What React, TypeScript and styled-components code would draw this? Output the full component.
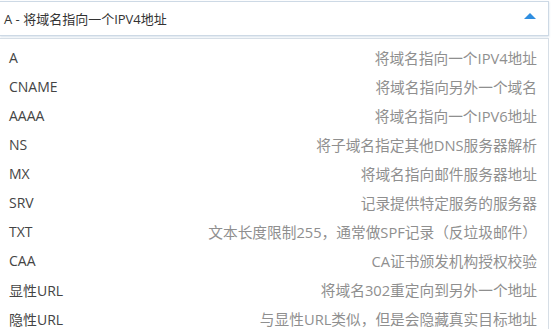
import React from 'react';
import styled, { createGlobalStyle } from 'styled-components';

const Global = createGlobalStyle`
  html, body {
    margin: 0;
    padding: 0;
    background: #ffffff;
    overflow: hidden;
  }
  body {
    font-family: "Open Sans", "Noto Sans CJK SC", sans-serif;
  }
`;

const Wrap = styled.div`
  width: 549px;
  padding-top: 1px;
`;

const Select = styled.div`
  height: 33px;
  border: 1px solid #cdd9e5;
  border-left: none;
  box-shadow: 0 1px 2px rgba(140, 170, 200, 0.35);
  display: flex;
  align-items: center;
  justify-content: space-between;
  padding: 0 12px 0 4px;
  color: #333;
  font-size: 13px;
`;

const Caret = styled.span`
  width: 0;
  height: 0;
  border-left: 6px solid transparent;
  border-right: 6px solid transparent;
  border-bottom: 6px solid #2f8ee0;
  margin-top: -6px;
`;

const Menu = styled.div`
  margin-top: 2px;
  border: 1px solid #d6dee6;
  border-left: none;
  padding-top: 4px;
`;

const Row = styled.div`
  height: 29px;
  display: flex;
  align-items: center;
  justify-content: space-between;
  padding: 0 11px 0 9px;
`;

const Name = styled.span`
  color: #444;
  font-size: 14px;
`;

const Desc = styled.span`
  color: #8f8f8f;
  font-size: 14.7px;
`;

const types: [string, string][] = [
  ['A', '将域名指向一个IPV4地址'],
  ['CNAME', '将域名指向另外一个域名'],
  ['AAAA', '将域名指向一个IPV6地址'],
  ['NS', '将子域名指定其他DNS服务器解析'],
  ['MX', '将域名指向邮件服务器地址'],
  ['SRV', '记录提供特定服务的服务器'],
  ['TXT', '文本长度限制255，通常做SPF记录（反垃圾邮件）'],
  ['CAA', 'CA证书颁发机构授权校验'],
  ['显性URL', '将域名302重定向到另外一个地址'],
  ['隐性URL', '与显性URL类似，但是会隐藏真实目标地址'],
];

export default function App() {
  return (
    <Wrap>
      <Global />
      <Select>
        <span>A - 将域名指向一个IPV4地址</span>
        <Caret />
      </Select>
      <Menu>
        {types.map(([name, desc]) => (
          <Row key={name}>
            <Name>{name}</Name>
            <Desc>{desc}</Desc>
          </Row>
        ))}
      </Menu>
    </Wrap>
  );
}
